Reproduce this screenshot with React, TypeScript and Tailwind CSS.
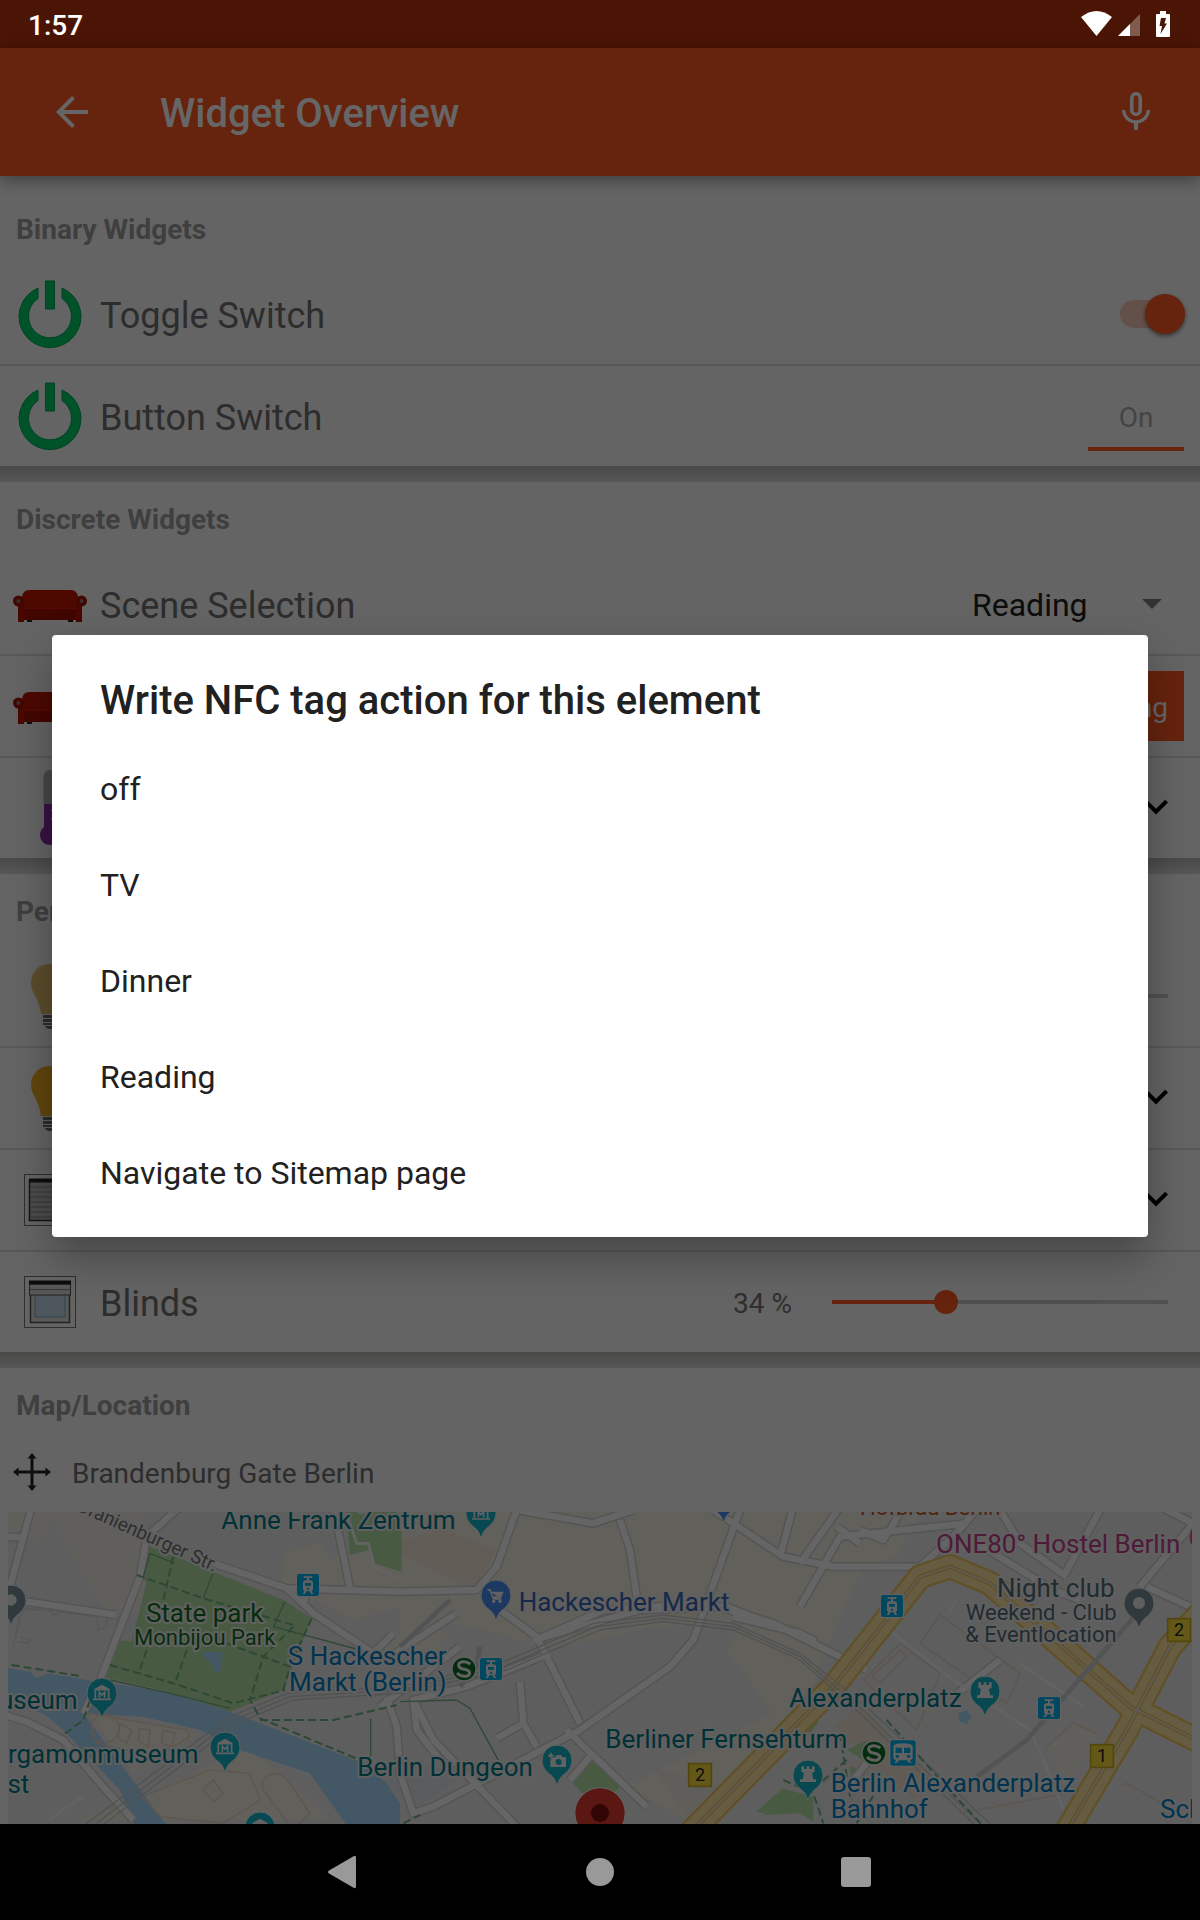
import React from "react";
import { MdArrowBack, MdMicNone } from "react-icons/md";

/* ---------- item icons ---------- */

function PowerIcon() {
  return (
    <svg viewBox="0 0 80 80" className="size-20 shrink-0" fill="#00d068" stroke="#00a552" strokeWidth="1" aria-hidden="true">
      <path d="M28 14A31 31 0 1 0 52 14V24.5A21.5 21.5 0 1 1 28 24.5Z" />
      <path d="M35.500 7h9v28h-9z" />
    </svg>
  );
}

function SofaIcon() {
  return (
    <svg viewBox="0 0 80 80" className="size-20 shrink-0" aria-hidden="true">
      <path d="M17 55h5v3h-5zM58 55h5v3h-5z" fill="#222" />
      <path d="M19 26H61Q67 26 68 33V56H12V33Q13 26 19 26Z" fill="#c01400" />
      <path d="M14 44H66V56H14Z" fill="#a51000" />
      <path d="M14 44.500H66" stroke="#d01a00" strokeWidth="1" />
      <path d="M8 40h6v18H8zM66 40h6v18h-6z" fill="#b81200" />
      <circle cx="8.500" cy="37" r="5.500" fill="#a81000" />
      <circle cx="71.500" cy="37" r="5.500" fill="#a81000" />
      <circle cx="8.500" cy="37" r="2" fill="#8d7a70" />
      <circle cx="71.500" cy="37" r="2" fill="#8d7a70" />
    </svg>
  );
}

function ThermometerIcon() {
  return (
    <svg viewBox="0 0 80 80" className="size-20 shrink-0" aria-hidden="true">
      <path d="M33.500 9Q34 2 40 2Q46 2 46.500 9V36H33.500Z" fill="#a9b4b8" />
      <path d="M34 36H46V59A10 10 0 1 1 34 59Z" fill="#8c2fa8" />
      <path d="M41 13h5M41 22h5M41 31h5M41 42h5M41 51h5" stroke="#ddd" strokeWidth="1.500" />
    </svg>
  );
}

function BulbIcon({ fill }: { fill: string }) {
  return (
    <svg viewBox="0 0 80 80" className="size-20 shrink-0" aria-hidden="true">
      <path d="M40 8C29 8 21 16 21 27C21 37 29 41 31 58H49C51 41 59 37 59 27C59 16 51 8 40 8Z" fill={fill} />
      <path d="M33 59h14v3H33zM33 63h14v3H33zM33 67h14v2H33zM35 70h10q-1 3-5 3t-5-3z" fill="#6b6b6b" />
    </svg>
  );
}

function BlindsIcon({ closed }: { closed?: boolean }) {
  return (
    <svg viewBox="0 0 80 80" className="size-20 shrink-0" aria-hidden="true">
      <rect x="14.500" y="14.500" width="51" height="51" fill="none" stroke="#777" />
      {closed ? (
        <>
          <rect x="19.500" y="20.500" width="41" height="40" fill="#bdbdbd" stroke="#333" strokeWidth="1.500" />
          <path d="M20 27h40M20 32h40M20 37h40M20 42h40M20 47h40M20 52h40M20 57h40" stroke="#888" />
        </>
      ) : (
        <>
          <rect x="20.500" y="20.500" width="39" height="40" fill="#dededb" stroke="#555" strokeWidth="1.500" />
          <rect x="25" y="31" width="30" height="24" fill="#c3d9ea" stroke="#7fa9c9" />
          <rect x="19.500" y="22" width="41" height="11" fill="#dcdcdc" stroke="#555" />
          <path d="M20 27.500h40" stroke="#888" />
        </>
      )}
      <path d="M19 18.500h42v4H19z" fill="#222" />
    </svg>
  );
}

function ChevronButton({ up, label }: { up?: boolean; label: string }) {
  return (
    <button type="button" aria-label={label} className="flex size-12 items-center justify-center text-black">
      <svg viewBox="0 0 24 24" className="size-12" fill="currentColor" aria-hidden="true">
        {up ? (
          <path d="M12 8l-6 6 1.410 1.410L12 10.830l4.590 4.580L18 14z" />
        ) : (
          <path d="M7.410 7.840L12 12.420l4.590-4.580L18 9.250l-6 6-6-6z" />
        )}
      </svg>
    </button>
  );
}

/* ---------- list building blocks ---------- */

function Section({ title, last, children }: { title: string; last?: boolean; children: React.ReactNode }) {
  return (
    <section>
      <h2 className="flex h-[72px] items-center px-4 pt-1 text-[28px] font-bold text-[#9e9e9e]">{title}</h2>
      <div className="divide-y-2 divide-[#dcdcdc]">{children}</div>
      {!last && <div className="h-4 bg-linear-to-b from-[#b7b7b4] to-[#dadada]" />}
    </section>
  );
}

function Row({ icon, label, children }: { icon: React.ReactNode; label: string; children?: React.ReactNode }) {
  return (
    <div className="flex h-[100px] items-center px-[10px] [&:not(:last-child)]:h-[102px]">
      {icon}
      <span className="ml-[10px] grow pt-1 text-[36px] text-[#707070]">{label}</span>
      {children}
    </div>
  );
}

/* ---------- map ---------- */

const CYAN = "#12b5cb";

function Pin({ x, y, fill, children }: { x: number; y: number; fill: string; children?: React.ReactNode }) {
  return (
    <g transform={`translate(${x} ${y})`}>
      <path
        d="M0 76C-4 66 -6 56 -18 46C-34 34 -45 20 -45 0A45 45 0 0 1 45 0C45 20 34 34 18 46C6 56 4 66 0 76Z"
        fill={fill}
        stroke="#f4f4f4"
        strokeWidth="3"
      />
      {children}
    </g>
  );
}

function Museum() {
  return (
    <g fill="none" stroke="#f4f4f4" strokeWidth="5">
      <path d="M-22 -10L0 -22L22 -10Z" fill="#f4f4f4" />
      <path d="M-20 -8V16M20 -8V16M-27 19H27M-8 14V-2L0 6L8 -2V14" />
    </g>
  );
}

function Tower() {
  return <path d="M-20 -26h8v8h8v-8h8v8h8v-8h8v16l-8 5 4 18h8v8h-48v-8h8l4-18-8-5z" fill="#f4f4f4" />;
}

function Tram({ x, y }: { x: number; y: number }) {
  return (
    <g transform={`translate(${x} ${y})`}>
      <rect x="-35" y="-35" width="70" height="70" rx="9" fill="#00b2ef" stroke="#f2f2f2" strokeWidth="4" />
      <path d="M-13 -26H13V-21H3V-14H8Q15 -14 15 -6V13Q15 17 11 18L16 27H9L5 19H-5L-9 27H-16L-11 18Q-15 17 -15 13V-6Q-15 -14 -8 -14H-3V-21H-13Z" fill="#f2f2f2" />
      <path d="M-9 -6H9V2H-9ZM-3 8H3V14H-3Z" fill="#00b2ef" />
    </g>
  );
}

function SBahn({ x, y }: { x: number; y: number }) {
  return (
    <g transform={`translate(${x} ${y})`}>
      <circle r="36" fill="#0a6f24" stroke="#f2f2f2" strokeWidth="4" />
      <path d="M19 -15Q9 -23 -3 -22Q-17 -20 -16 -10Q-14 -1 1 1Q17 4 17 13Q15 22 1 22Q-11 22 -21 12" fill="none" stroke="#f2f2f2" strokeWidth="9" />
    </g>
  );
}

function RouteShield({ x, y, n }: { x: number; y: number; n: string }) {
  return (
    <g transform={`translate(${x} ${y})`}>
      <rect x="-34" y="-34" width="68" height="68" fill="#f8dc3c" stroke="#cfae20" strokeWidth="5" />
      <text y="19" textAnchor="middle" fontSize="54" fill="#222" stroke="none">{n}</text>
    </g>
  );
}

const minorRoads = [
  "M95 20L30 260",
  "M0 110L70 112",
  "M540 20L440 110L420 230L300 540L250 640",
  "M80 305L350 345",
  "M640 190L860 265L1200 275L1430 270L1490 200L1550 30",
  "M1000 20L1050 265",
  "M860 265L940 340L1120 460L1180 400",
  "M910 310L920 280",
  "M0 640L80 665L190 720L300 850L400 960",
  "M1160 590L1190 680L1200 820L1240 940L1300 920L1740 690L2010 500L2080 420L2220 30",
  "M1500 330L1610 410L1740 670",
  "M1600 420L1920 330L2180 320L2440 420L2400 400L2200 350",
  "M1610 420L1810 330L2120 310L2320 370L2600 510",
  "M1550 30L1780 70L1900 30",
  "M1860 60L1890 150L1910 290",
  "M2140 30L2350 170L2400 180",
  "M2380 20L2340 170",
  "M1650 460L1400 560L1240 600L1250 690L1320 780",
  "M1560 545L1570 670L1490 715",
  "M1570 670L1610 740",
  "M1700 690L1940 920",
  "M1770 770L1710 840",
  "M1240 600L1300 720L1560 990",
  "M2600 400L2530 510L2520 590L2550 620",
  "M2400 190L2520 20",
  "M2400 320L2520 110L2900 70",
  "M2400 180L2500 200L2760 200L2860 110L2930 30",
  "M2510 80L2580 130",
  "M2580 90L2650 120L2700 40",
  "M2900 110L3160 270L3240 300",
  "M3190 230L3300 30",
  "M3200 230L3060 130L3000 30",
  "M3440 260L3570 320",
  "M3420 260L3580 70L3480 20",
  "M2860 590L3000 480",
  "M2600 790L2560 840",
  "M1380 440L1140 620",
  "M1370 340L1170 470",
];

const laneRoads = [
  "M2640 370L2860 540L3090 690L3160 850L3190 930",
  "M150 960L200 920L250 890",
  "M3060 490L3250 620",
  "M2870 300L2850 330",
  "M1040 40L1070 130L1105 130L1125 205L1200 235",
];

const mainRoads = [
  "M2060 1010L2500 560L2760 230L2850 200L2970 250L3390 620L3590 720",
  "M3190 1010L3380 690L3510 440L3600 340",
];

function CityMap() {
  return (
    <svg
      viewBox="24 36 3552 936"
      preserveAspectRatio="xMidYMin slice"
      className="block h-[312px] w-full bg-[#eaeaea]"
      fontFamily="Roboto, sans-serif"
      role="img"
      aria-label="Map around Alexanderplatz in Berlin"
    >
      {/* built-up areas */}
      <g fill="#f5f0e0">
        <path d="M24 36H430L400 110L440 140L420 500L150 50L120 130L24 110Z" opacity=".6" />
        <path d="M850 160L960 130L990 180L1200 36H2400V250L2500 340L2440 560L2060 960L1880 860L2320 640L2180 450L2230 370L1960 380L1640 450L1500 400L1350 370L1200 430V320L1060 360L930 290L845 260Z" />
        <path d="M2400 36H2760L2690 170L2590 200L2470 460L2400 480Z" />
        <path d="M1060 460L1270 380L1350 400L1280 480Z" />
        <path d="M220 960L420 900L640 790L740 750L830 810L990 960Z" />
        <path d="M270 640L560 690L600 700L400 820Z" />
        <path d="M3140 740L3220 670L3300 700L3200 860Z" opacity=".6" />
      </g>
      <g fill="#f3e3d3">
        <path d="M1200 120L1330 90L1490 150L1420 270L1200 160Z" opacity=".8" />
        <path d="M2500 680L2580 620L2820 850L2740 900Z" opacity=".9" />
        <path d="M2540 800L2620 760L2720 860L2660 880Z" opacity=".7" />
      </g>
      <g fill="#e3e5ec">
        <path d="M350 340H410V420L340 430Z" />
        <path d="M1200 780L1400 820L1240 930L1160 850Z" />
        <path d="M1960 800L2200 870L2060 960Z" opacity=".4" />
      </g>
      {/* parks */}
      <g fill="#b4e0a5">
        <path d="M440 135L850 300L935 355L850 570L690 635L520 580L310 530L345 420L395 425L440 245L410 225Z" />
        <path d="M1040 36H1190L1205 100V215L1120 190L1105 150L1050 165Z" />
        <path d="M1720 850L1780 780L1860 860L1790 930Z" />
        <path d="M2345 865L2440 890L2440 965L2400 940L2290 945Z" />
        <path d="M2270 935L2330 880L2345 885L2290 940Z" />
        <path d="M2540 750L2600 720L2590 780ZM2550 800L2600 810L2560 880Z" />
        <path d="M2410 680L2440 640L2455 665L2430 700Z" />
      </g>
      {/* water */}
      <g fill="#a8dafc">
        <path d="M24 505L90 515L110 535L145 520L260 540L500 575L690 635L1090 790L1160 850L1200 910V990H1050L930 820L720 750L600 690L430 650L250 640L420 870L510 990H410L360 870L190 690L130 640L24 610Z" />
        <path d="M610 455H668L660 515H640L636 485L614 478Z" />
        <path d="M2875 640L2900 630L2915 650L2900 672L2880 665Z" />
      </g>
      {/* building outlines */}
      <g fill="none" stroke="#e9d5c2" strokeWidth="4">
        <circle cx="315" cy="685" r="42" />
        <path d="M265 640L560 690L570 710L470 770L290 730Z" />
        <path d="M360 670L395 690L380 730L355 715ZM420 685L450 690L445 740L415 720ZM490 690L525 700L515 740L485 730Z" />
        <path d="M425 890L630 810L750 820L780 900L670 970L480 950ZM610 870L640 840L670 880L640 905Z" />
        <path d="M790 870Q780 830 820 820Q850 820 870 850L930 940L880 990M790 870L880 990" />
        <path d="M2590 540L2700 430L2820 520L2750 690ZM2615 530L2700 450L2720 470L2640 550Z" />
        <path d="M2760 430L2820 345L3060 520L3020 610Z" />
        <path d="M3140 740L3220 670L3290 700M3360 860L3380 850L3540 940M3200 880L3090 900L2880 940" />
        <path d="M2470 850L2500 820L2570 870L2540 930" />
      </g>
      <g fill="none" stroke="#dadada" strokeWidth="5">
        <path d="M80 320L60 350L40 440M80 325L160 335V345H175V335L290 350L300 325L325 340L320 380L295 390L290 350" />
        <path d="M60 410L90 420L85 430L55 425" />
      </g>
      {/* streets */}
      <g fill="none" strokeLinejoin="round">
        <g stroke="#d2d2d4" strokeWidth="28">{minorRoads.map((d) => <path key={d} d={d} />)}</g>
        <g stroke="#fdfdfd" strokeWidth="19">{minorRoads.map((d) => <path key={d} d={d} />)}</g>
        <g stroke="#f8f8f8" strokeWidth="8">{laneRoads.map((d) => <path key={d} d={d} />)}</g>
        <g stroke="#f1c962" strokeWidth="76">{mainRoads.map((d) => <path key={d} d={d} />)}</g>
        <g stroke="#fde6a3" strokeWidth="62">{mainRoads.map((d) => <path key={d} d={d} />)}</g>
        <g stroke="#f1c962" strokeWidth="14">{mainRoads.map((d) => <path key={d} d={d} />)}</g>
        <g stroke="#e8e8e8" strokeWidth="5">{mainRoads.map((d) => <path key={d} d={d} />)}</g>
        {/* railway */}
        <g stroke="#c9cbcc" strokeWidth="4">
          <path d="M220 1000L690 650L860 580L1200 560L1500 490L1780 370L1990 345L2200 370L2400 460L2600 620L3000 1000" />
          <path d="M236 1010L700 660L870 590L1200 570L1510 500L1790 380L1990 355L2200 380L2400 470L2600 640L2980 1010" />
          <path d="M250 1020L710 670L880 600L1200 580L1520 510L1800 390L1990 365L2200 390L2400 480L2580 640L2960 1010" />
        </g>
        <path d="M1380 560L1430 500L1440 440M1200 440L1350 300M3420 330L3080 720L2890 860" stroke="#cdd0d4" strokeWidth="14" />
        {/* footpaths */}
        <g stroke="#6fb583" strokeWidth="6" strokeDasharray="24 12">
          <path d="M410 225L610 295L880 375M520 170L490 300M330 495L520 550L700 610L855 570M880 380L790 470L750 600L780 655L1080 780" />
          <path d="M440 450L415 520M560 450L525 550M680 430L870 500L850 570M935 355L870 500M35 495L240 528M270 600L250 660L190 705" />
          <path d="M780 660H1000L1190 615M2350 840L2440 880L2470 970M2540 780L2430 875M2520 700L2550 890M2660 660L2830 850L2960 990M2570 970L2630 870" />
          <path d="M1210 970L1260 945M1750 970L1800 935" />
        </g>
        <path d="M430 230L450 160L525 190M640 215L610 295M855 305L820 380L1080 450M1112 655V770M1200 605L1370 600L1410 625L1500 790M330 540L510 580L690 625" stroke="#76b488" strokeWidth="4" />
      </g>

      {/* labels */}
      <g paintOrder="stroke" stroke="#efefef" strokeWidth="12" strokeLinejoin="round" fontSize="78">
        <text fontSize="57" fill="#757575" transform="translate(226 30) rotate(24)">Oranienburger Str.</text>
        <text fontSize="57" fill="#757575" transform="translate(500 20) rotate(35)">r.</text>
        <g fill="#007b8b">
          <text x="664" y="87">Anne Frank Zentrum</text>
          <text x="233" y="627" textAnchor="end">Bodemuseum</text>
          <text x="596" y="790" textAnchor="end">Pergamonmuseum</text>
          <text x="88" y="880" textAnchor="end">Ost</text>
          <text x="1072" y="827">Berlin Dungeon</text>
          <text x="1816" y="743">Berliner Fernsehturm</text>
          <text x="2368" y="621">Alexanderplatz</text>
        </g>
        <text x="614" y="365" textAnchor="middle" fill="#11701c">State park</text>
        <text x="614" y="435" textAnchor="middle" fontSize="66" fill="#11701c">Monbijou Park</text>
        <g fill="#0080c6">
          <text x="1340" y="495" textAnchor="end">S Hackescher</text>
          <text x="1340" y="573" textAnchor="end">Markt (Berlin)</text>
          <text x="2492" y="876">Berlin Alexanderplatz</text>
          <text x="2492" y="954">Bahnhof</text>
          <text x="3480" y="954">Schillingstraße</text>
        </g>
        <text x="1556" y="333" fill="#3b66b5">Hackescher Markt</text>
        <text x="2580" y="44" fontSize="66" fill="#c4571b">Hofbräu Berlin</text>
        <text x="2808" y="159" fill="#c2418d">ONE80° Hostel Berlin</text>
        <g fill="#546e7a" textAnchor="end">
          <text x="3344" y="291">Night club</text>
          <text x="3350" y="360" fontSize="66">Weekend - Club</text>
          <text x="3350" y="426" fontSize="66">&amp; Eventlocation</text>
        </g>
      </g>

      {/* markers */}
      <Pin x={33} y={300} fill="#78909c"><circle r="17" fill="#eee" /></Pin>
      <Pin x={306} y={579} fill={CYAN}><Museum /></Pin>
      <Pin x={675} y={741} fill={CYAN}><Museum /></Pin>
      <Pin x={780} y={981} fill={CYAN}><Museum /></Pin>
      <Pin x={1443} y={38} fill={CYAN}><Museum /></Pin>
      <Pin x={1488} y={285} fill="#4a90f5">
        <path d="M-26 -16H-18L-8 12H16M-15 -8H20L14 6H-10" fill="#f4f4f4" stroke="#f4f4f4" strokeWidth="4" />
        <circle cx="-7" cy="19" r="5" fill="#f4f4f4" />
        <circle cx="12" cy="19" r="5" fill="#f4f4f4" />
      </Pin>
      <Pin x={2171} y={-8} fill="#4a90f5" />
      <Pin x={1671} y={780} fill={CYAN}>
        <path d="M-16 -8H-6L-1 -15H12L17 -8H27V21H-20V-2H-16Z" fill="#f4f4f4" />
        <circle cx="5" cy="6" r="9" fill={CYAN} />
        <path d="M-18 -22V-4M-27 -13H-9" stroke="#f4f4f4" strokeWidth="5" />
      </Pin>
      <Pin x={2424} y={825} fill={CYAN}><Tower /></Pin>
      <Pin x={2955} y={573} fill={CYAN}><Tower /></Pin>
      <Pin x={3417} y={309} fill="#78909c"><circle r="18" fill="#eee" /></Pin>
      <Pin x={3612} y={110} fill="#e0529c" />

      <Tram x={924} y={255} />
      <Tram x={1473} y={507} />
      <Tram x={2676} y={318} />
      <Tram x={3147} y={624} />
      <SBahn x={1392} y={507} />
      <SBahn x={2622} y={759} />
      <g transform="translate(2709 759)">
        <rect x="-40" y="-40" width="80" height="80" rx="10" fill="#00b2ef" stroke="#f2f2f2" strokeWidth="4" />
        <path d="M-29 -20Q-27 -29 0 -29T29 -20V12Q29 20 20 21L26 29H17L12 22H-12L-17 29H-26L-20 21Q-29 20 -29 12Z" fill="#f2f2f2" />
        <path d="M-22 -16H-3V0H-22ZM3 -16H22V0H3Z" fill="#00b2ef" />
        <circle cx="-17" cy="10" r="5" fill="#00b2ef" />
        <circle cx="17" cy="10" r="5" fill="#00b2ef" />
      </g>
      <RouteShield x={2100} y={825} n="2" />
      <RouteShield x={3537} y={390} n="2" />
      <RouteShield x={3306} y={768} n="1" />
      <circle cx="1800" cy="939" r="76" fill="#e33b2e" stroke="#f2f2f2" strokeWidth="4" />
      <circle cx="1800" cy="939" r="27" fill="#7d0d0d" />
    </svg>
  );
}

/* ---------- system bars ---------- */

function StatusBar() {
  return (
    <header className="flex h-12 items-center bg-[#4b1505] px-7 text-white">
      <time className="grow pt-1 text-[28px] leading-[32px] font-medium">1:57</time>
      <svg viewBox="0 0 92 48" className="h-12 w-[92px]" fill="#fff" aria-label="Wi-Fi, mobile signal, battery charging" role="img">
        <path d="M1 17Q16.500 5 32 17L16.500 36Z" />
        <path d="M60 14V36H38Z" opacity=".3" />
        <path d="M50 24V36H38Z" />
        <path fillRule="evenodd" d="M80 11h6v3h3q1 0 1 1v21q0 1-1 1H77q-1 0-1-1V15q0-1 1-1h3ZM81 18L79.500 26H82L80.500 34L87 23.500H84.500L86 18Z" />
      </svg>
    </header>
  );
}

function NavigationBar() {
  return (
    <nav className="flex h-24 items-center justify-center bg-black text-[#999]" aria-label="System navigation">
      <button type="button" aria-label="Back" className="flex h-24 w-64 items-center justify-center">
        <svg viewBox="0 0 34 34" className="size-[34px]" fill="currentColor" aria-hidden="true">
          <path d="M27 1Q29 0 29 3V31Q29 34 27 33L2 18.500Q0 17 2 15.500Z" />
        </svg>
      </button>
      <button type="button" aria-label="Home" className="flex h-24 w-64 items-center justify-center">
        <span className="size-7 rounded-full bg-[#999]" />
      </button>
      <button type="button" aria-label="Recent apps" className="flex h-24 w-64 items-center justify-center">
        <span className="size-[30px] rounded-[3px] bg-[#999]" />
      </button>
    </nav>
  );
}

/* ---------- dialog ---------- */

const actions = ["off", "TV", "Dinner", "Reading", "Navigate to Sitemap page"];

function NfcDialog() {
  return (
    <div className="absolute inset-0 z-10 flex items-center bg-black/60 px-[52px]">
      <div
        role="dialog"
        aria-modal="true"
        aria-labelledby="nfc-title"
        className="w-full rounded-[4px] bg-white pt-[38px] pb-4 text-[#212121] shadow-[0_20px_44px_rgba(0,0,0,0.3)]"
      >
        <h1 id="nfc-title" className="mb-3 px-12 text-[40px] leading-[56px] font-medium">
          Write NFC tag action for this element
        </h1>
        <ul>
          {actions.map((a) => (
            <li key={a}>
              <button type="button" className="flex h-24 w-full items-center px-12 text-left text-[32px]">
                {a}
              </button>
            </li>
          ))}
        </ul>
      </div>
    </div>
  );
}

const sliderBase =
  "h-6 w-[360px] appearance-none bg-[length:336px_4px] bg-center bg-no-repeat [&::-webkit-slider-thumb]:size-6 [&::-webkit-slider-thumb]:appearance-none [&::-webkit-slider-thumb]:rounded-full [&::-webkit-slider-thumb]:bg-[#ff5722]";

export default function App() {
  return (
    <div className="flex min-h-screen flex-col bg-[#fafafa] font-[Roboto,sans-serif]">
      <StatusBar />
      <div className="relative grow">
        <div className="relative flex h-32 items-center bg-[#ff5722] px-10 text-white shadow-[0_4px_16px_rgba(0,0,0,0.4)]">
          <button type="button" aria-label="Navigate up" className="flex size-16 items-center justify-center">
            <MdArrowBack className="size-12" />
          </button>
          <h1 className="ml-14 grow pt-1 text-[40px] font-medium">Widget Overview</h1>
          <button type="button" aria-label="Voice recognition" className="-mr-2 flex size-16 items-center justify-center">
            <MdMicNone className="size-12" />
          </button>
        </div>

        <main className="pt-4">
          <Section title="Binary Widgets">
            <Row icon={<PowerIcon />} label="Toggle Switch">
              <input
                type="checkbox"
                role="switch"
                defaultChecked
                aria-label="Toggle Switch"
                className="mr-[5px] flex h-7 w-[65px] appearance-none items-center justify-end rounded-full bg-[#ff5722]/30 before:size-10 before:rounded-full before:bg-[#ff5722] before:shadow-[0_2px_4px_rgba(0,0,0,0.5)]"
              />
            </Row>
            <Row icon={<PowerIcon />} label="Button Switch">
              <button type="button" className="mr-[6px] h-[70px] w-24 border-b-4 border-[#ff5722] pt-2 text-[28px] text-[#aaa]">
                On
              </button>
            </Row>
          </Section>

          <Section title="Discrete Widgets">
            <Row icon={<SofaIcon />} label="Scene Selection">
              <div className="mr-7 flex items-center">
                <select aria-label="Scene Selection" defaultValue="Reading" className="w-[170px] appearance-none pt-0.5 text-[32px] text-[#212121]">
                  <option>off</option>
                  <option>TV</option>
                  <option>Dinner</option>
                  <option>Reading</option>
                </select>
                <svg viewBox="0 0 20 10" className="h-[10px] w-5" fill="#7d7d7d" aria-hidden="true">
                  <path d="M0 0H20L10 10Z" />
                </svg>
              </div>
            </Row>
            <Row icon={<SofaIcon />} label="Scene Selection">
              <button type="button" className="mr-[6px] h-[70px] bg-[#ff5722] px-4 pt-1 text-[28px] text-white">
                Reading
              </button>
            </Row>
            <Row icon={<ThermometerIcon />} label="Setpoint">
              <div className="mr-[10px] flex">
                <ChevronButton up label="Increase setpoint" />
                <ChevronButton label="Decrease setpoint" />
              </div>
            </Row>
          </Section>

          <Section title="Percent-based Widgets">
            <Row icon={<BulbIcon fill="#e4bf6c" />} label="Dimmer">
              <input
                type="range"
                defaultValue={30}
                aria-label="Dimmer"
                className={`mr-[10px] bg-[linear-gradient(to_right,#ff5722_30%,#cbcbcb_30%)] ${sliderBase}`}
              />
            </Row>
            <Row icon={<BulbIcon fill="#f0b021" />} label="Dimmer">
              <div className="mr-[10px] flex">
                <ChevronButton up label="Brighter" />
                <ChevronButton label="Darker" />
              </div>
            </Row>
            <Row icon={<BlindsIcon closed />} label="Roller Shutter">
              <div className="mr-[10px] flex">
                <ChevronButton up label="Shutter up" />
                <ChevronButton label="Shutter down" />
              </div>
            </Row>
            <Row icon={<BlindsIcon />} label="Blinds">
              <output className="mr-7 pt-1 text-[28px] text-[#757575]">34 %</output>
              <input
                type="range"
                defaultValue={34}
                aria-label="Blinds"
                className={`mr-[10px] bg-[linear-gradient(to_right,#ff5722_34%,#cbcbcb_34%)] ${sliderBase}`}
              />
            </Row>
          </Section>

          <Section title="Map/Location" last>
            <div>
              <div className="flex h-[72px] items-center gap-5 px-3 pb-2">
                <svg viewBox="0 0 40 40" className="size-10" fill="#222" aria-hidden="true">
                  <path d="M18.500 4h3v32h-3zM4 18.500h32v3H4z" />
                  <path d="M20 1l4.500 5.500h-9zM20 39l4.500-5.500h-9zM1 20l5.500-4.500v9zM39 20l-5.500-4.500v9z" />
                </svg>
                <span className="pt-1 text-[28px] text-[#707070]">Brandenburg Gate Berlin</span>
              </div>
              <div className="px-2">
                <CityMap />
              </div>
            </div>
          </Section>
        </main>

        <NfcDialog />
      </div>
      <NavigationBar />
    </div>
  );
}
